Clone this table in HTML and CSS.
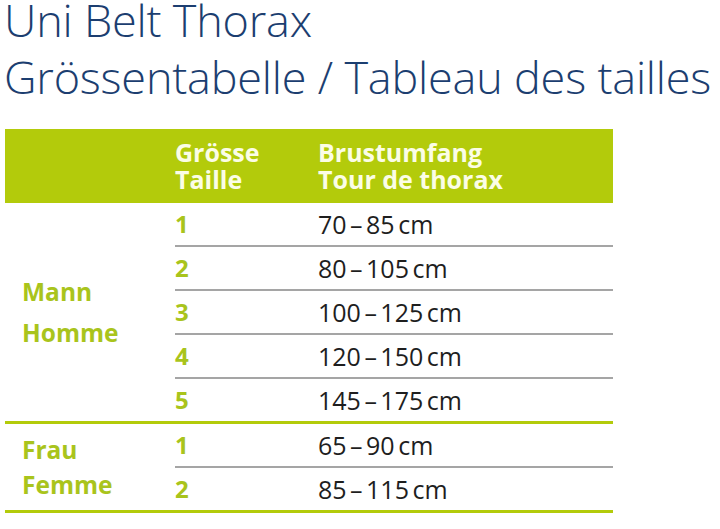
FILE: index.html
```html
<!DOCTYPE html>
<html lang="de">
<head>
<meta charset="utf-8">
<title>Uni Belt Thorax – Grössentabelle</title>
<link rel="stylesheet" href="styles.css">
</head>
<body>
<header class="title">
  <h1 class="title-line title-line--first">Uni Belt Thorax</h1>
  <h2 class="title-line title-line--second">Grössentabelle / Tableau des tailles</h2>
</header>
<section class="table">
  <div class="thead">
    <div class="th-label"></div>
    <div class="th-size"><div>Grösse</div><div>Taille</div></div>
    <div class="th-value"><div>Brustumfang</div><div>Tour de thorax</div></div>
  </div>
  <div class="group">
    <div class="group-label group-label--wide"><span>Mann</span><span>Homme</span></div>
    <div class="rows">
      <div class="row"><span class="size">1</span><span class="value">70 – 85 cm</span></div>
      <div class="row"><span class="size">2</span><span class="value">80 – 105 cm</span></div>
      <div class="row"><span class="size">3</span><span class="value">100 – 125 cm</span></div>
      <div class="row"><span class="size">4</span><span class="value">120 – 150 cm</span></div>
      <div class="row"><span class="size">5</span><span class="value">145 – 175 cm</span></div>
    </div>
  </div>
  <div class="group">
    <div class="group-label group-label--tight"><span>Frau</span><span>Femme</span></div>
    <div class="rows">
      <div class="row"><span class="size">1</span><span class="value">65 – 90 cm</span></div>
      <div class="row"><span class="size">2</span><span class="value">85 – 115 cm</span></div>
    </div>
  </div>
</section>
</body>
</html>
```

FILE: styles.css
```css
html, body {
  margin: 0;
  padding: 0;
  background: #ffffff;
}

body {
  font-family: "Open Sans", "Liberation Sans", sans-serif;
}

.title {
  padding: 0 0 0 4px;
  color: #1c3e70;
}

.title-line {
  margin: 0;
  font-weight: 300;
  font-size: 45px;
  letter-spacing: -0.2px;
}

.title-line--first {
  line-height: 40px;
}

.title-line--second {
  line-height: 57px;
  margin-top: 8px;
}

.table {
  margin: 24px 0 0 5px;
  width: 608px;
}

.thead {
  display: grid;
  grid-template-columns: 170px 143px 1fr;
  background: #b3cb0b;
  color: #fbfde6;
  font-weight: 700;
  font-size: 25px;
  line-height: 27px;
  height: 74px;
  align-items: center;
}

.group {
  display: flex;
  border-bottom: 3px solid #b3cb0b;
}

.group-label {
  width: 170px;
  box-sizing: border-box;
  padding-left: 17px;
  display: flex;
  flex-direction: column;
  justify-content: center;
  color: #a9c41c;
  font-weight: 700;
  font-size: 24.5px;
}

.group-label--wide {
  line-height: 41px;
}

.group-label--tight {
  line-height: 35px;
}

.rows {
  flex: 1;
  display: flex;
  flex-direction: column;
}

.row {
  display: grid;
  grid-template-columns: 143px 1fr;
  height: 44px;
  box-sizing: border-box;
  border-bottom: 2px solid #a5a5a5;
  line-height: 42px;
}

.row:last-child {
  border-bottom: none;
  height: 42px;
}

.size {
  color: #a9c41c;
  font-weight: 700;
  font-size: 24px;
}

.value {
  color: #1e1e1e;
  font-weight: 400;
  font-size: 25px;
  word-spacing: -3px;
}
```
